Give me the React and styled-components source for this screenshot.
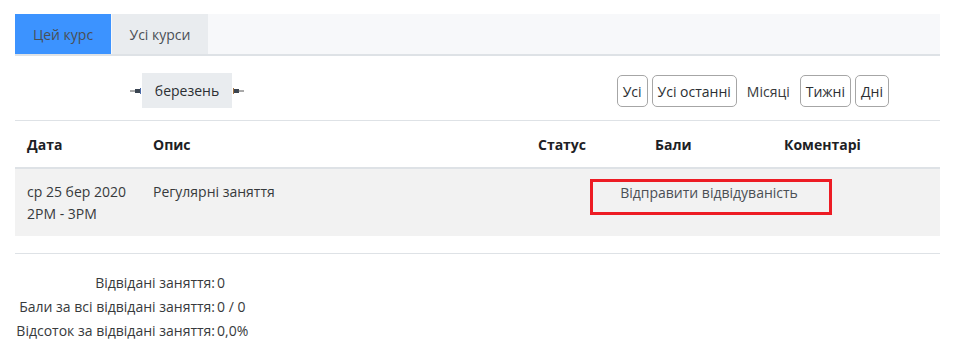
import React from "react";
import styled, { createGlobalStyle } from "styled-components";

const Global = createGlobalStyle`
  html, body { margin: 0; padding: 0; background: #fff; }
  body {
    font-family: "Open Sans", "Noto Sans", sans-serif;
    font-size: 14px;
    color: #373a3c;
  }
`;

const Page = styled.div`
  padding: 14px 18px 0 15px;
  width: 925px;
`;

const TabBar = styled.div`
  display: flex;
  height: 40px;
  background: #f7f8fa;
  border-bottom: 2px solid #dee2e6;
`;

const Tab = styled.div`
  width: ${(p) => p.$w}px;
  margin-right: 1px;
  display: flex;
  align-items: center;
  justify-content: center;
  background: ${(p) => (p.$active ? "#3c93ff" : "#e9ecef")};
  color: #4a4f55;
  font-size: 14px;
`;

const Controls = styled.div`
  display: flex;
  align-items: center;
  height: 64px;
  border-bottom: 1px solid #dee2e6;
`;

const MonthNav = styled.div`
  display: flex;
  align-items: center;
  margin-left: 115px;
  margin-top: 5px;
`;

const Arrow = styled.svg`
  width: 11px;
  height: 6px;
  display: block;
`;

const Month = styled.div`
  background: #e9ecef;
  height: 35px;
  width: 90px;
  display: flex;
  align-items: center;
  justify-content: center;
  margin: 0 1px;
  color: #2b2f33;
`;

const Views = styled.div`
  display: flex;
  gap: 4px;
  margin-left: auto;
  margin-right: 51px;
  margin-top: 6px;
`;

const ViewButton = styled.div`
  height: 32px;
  box-sizing: border-box;
  padding: 0 5px;
  border: 1px solid ${(p) => (p.$plain ? "transparent" : "#a6a6a6")};
  border-radius: 5px;
  display: flex;
  align-items: center;
  color: ${(p) => (p.$plain ? "#373a3c" : "#2b2f33")};
`;

const Table = styled.div`
  display: grid;
  grid-template-columns: 126px 385px 117px 129px 1fr;
`;

const HeadCell = styled.div`
  height: 46px;
  padding: 0 12px;
  display: flex;
  align-items: center;
  font-weight: 700;
  color: #1d2125;
  border-bottom: 2px solid #dee2e6;
`;

const Cell = styled.div`
  background: #f2f2f2;
  padding: 12px 12px 11px;
  line-height: 22px;
  min-height: 44px;
  color: #373a3c;
`;

const ActionCell = styled.div`
  background: #f2f2f2;
  grid-column: 3 / span 3;
  padding-top: 10px;
`;

const AttendanceBox = styled.div`
  margin-left: 64px;
  width: 242px;
  height: 36px;
  box-sizing: border-box;
  border: 3px solid #ed1c24;
  text-align: center;
  line-height: 22px;
  padding-top: 0;
  padding-right: 4px;
  color: #4a4f55;
`;

const Divider = styled.div`
  margin-top: 17px;
  border-top: 1px solid #dee2e6;
`;

const Stats = styled.div`
  display: grid;
  grid-template-columns: 200px auto;
  column-gap: 2px;
  margin-top: 17px;
  line-height: 24px;
  justify-content: start;
`;

const StatLabel = styled.div`
  text-align: right;
  color: #373a3c;
`;

const StatValue = styled.div`
  color: #373a3c;
`;

const LeftArrow = () => (
  <Arrow viewBox="0 0 11 6">
    <line x1="0" y1="3" x2="6" y2="3" stroke="#555" strokeWidth="1" />
    <rect x="5" y="1" width="5" height="4" fill="#3a4450" />
    <rect x="10" y="0" width="1" height="6" fill="#4a6aa8" />
  </Arrow>
);

const RightArrow = () => (
  <Arrow viewBox="0 0 11 6">
    <rect x="0" y="0" width="1" height="6" fill="#a07040" />
    <rect x="1" y="1" width="5" height="4" fill="#3a4450" />
    <line x1="5" y1="3" x2="11" y2="3" stroke="#555" strokeWidth="1" />
  </Arrow>
);

export default function App() {
  return (
    <Page>
      <Global />
      <TabBar>
        <Tab $active $w={96}>Цей курс</Tab>
        <Tab $w={96}>Усі курси</Tab>
      </TabBar>
      <Controls>
        <MonthNav>
          <LeftArrow />
          <Month>березень</Month>
          <RightArrow />
        </MonthNav>
        <Views>
          <ViewButton>Усі</ViewButton>
          <ViewButton>Усі останні</ViewButton>
          <ViewButton $plain>Місяці</ViewButton>
          <ViewButton>Тижні</ViewButton>
          <ViewButton>Дні</ViewButton>
        </Views>
      </Controls>
      <Table>
        <HeadCell>Дата</HeadCell>
        <HeadCell>Опис</HeadCell>
        <HeadCell>Статус</HeadCell>
        <HeadCell>Бали</HeadCell>
        <HeadCell>Коментарі</HeadCell>
        <Cell>
          ср 25 бер 2020
          <br />
          2PM - 3PM
        </Cell>
        <Cell>Регулярні заняття</Cell>
        <ActionCell>
          <AttendanceBox>Відправити відвідуваність</AttendanceBox>
        </ActionCell>
      </Table>
      <Divider />
      <Stats>
        <StatLabel>Відвідані заняття:</StatLabel>
        <StatValue>0</StatValue>
        <StatLabel>Бали за всі відвідані заняття:</StatLabel>
        <StatValue>0 / 0</StatValue>
        <StatLabel>Відсоток за відвідані заняття:</StatLabel>
        <StatValue>0,0%</StatValue>
      </Stats>
    </Page>
  );
}
